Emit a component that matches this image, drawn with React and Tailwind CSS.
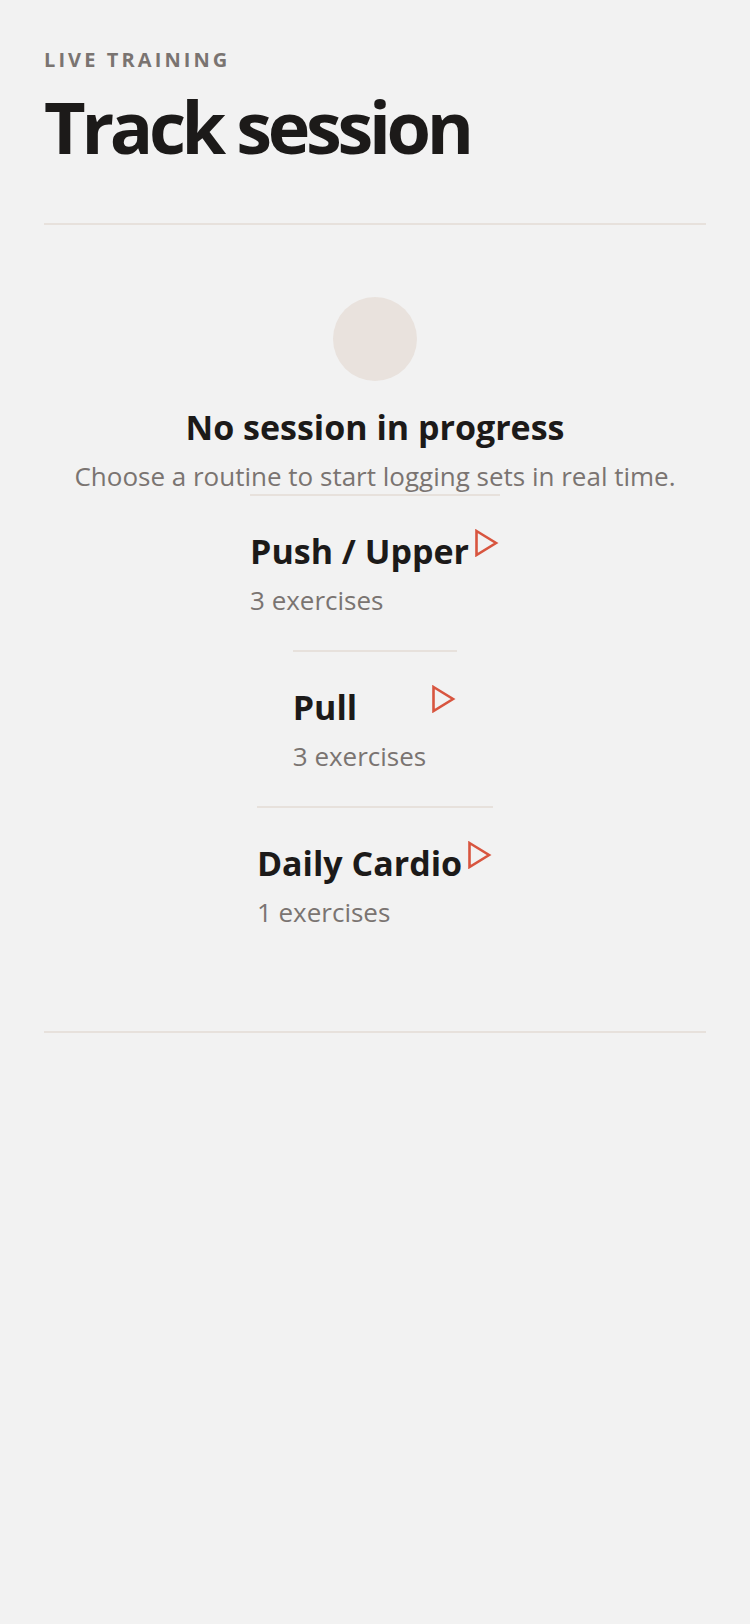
import React from "react";

const routines = [
  { name: "Push / Upper", count: 3 },
  { name: "Pull", count: 3 },
  { name: "Daily Cardio", count: 1 },
];

function PlayIcon() {
  return (
    <svg width="26" height="28" viewBox="0 0 26 28" fill="none" className="shrink-0">
      <polygon
        points="2.5,2 22,14 2.5,26"
        stroke="#d8553f"
        strokeWidth="2.6"
        strokeLinejoin="miter"
        fill="none"
      />
    </svg>
  );
}

export default function App() {
  return (
    <div className="min-h-screen bg-[#f2f2f2] px-[44px] font-['Open_Sans',sans-serif] text-[#1c1a19]">
      <header className="border-b-2 border-[#e7e1dc] pt-[45px] pb-[57px]">
        <p className="text-[20px] font-bold uppercase leading-[30px] tracking-[0.155em] text-[#7a7471]">
          Live training
        </p>
        <h1 className="mt-[12px] text-[72px] font-bold leading-[79px] tracking-[-0.06em]">
          Track session
        </h1>
      </header>

      <section className="flex flex-col items-center border-b-2 border-[#e7e1dc] pt-[72px] pb-[69px]">
        <div className="h-[84px] w-[84px] rounded-full bg-[#e9e2dd]" />
        <h2 className="mt-[24px] text-[34px] font-bold leading-[44px]">No session in progress</h2>
        <p className="mt-[9px] text-[26px] leading-[36px] text-[#7a7471]">
          Choose a routine to start logging sets in real time.
        </p>
        <ul className="flex flex-col items-center">
          {routines.map((r) => (
            <li
              key={r.name}
              className="flex items-start gap-[5px] border-t-2 border-[#e7e1dc] pt-[33px] pb-[30px]"
            >
              <div className="flex flex-col">
                <span className="text-[34px] font-bold leading-[44px]">{r.name}</span>
                <span className="mt-[8px] text-[26px] leading-[39px] text-[#7a7471]">
                  {r.count} exercises
                </span>
              </div>
              <PlayIcon />
            </li>
          ))}
        </ul>
      </section>
    </div>
  );
}
